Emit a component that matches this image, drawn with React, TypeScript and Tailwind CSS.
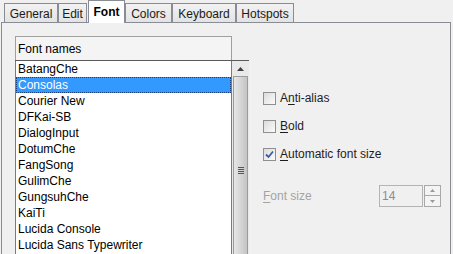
import React from 'react';

const fonts = [
  'BatangChe',
  'Consolas',
  'Courier New',
  'DFKai-SB',
  'DialogInput',
  'DotumChe',
  'FangSong',
  'GulimChe',
  'GungsuhChe',
  'KaiTi',
  'Lucida Console',
  'Lucida Sans Typewriter',
];

const tabs = [
  { label: 'General', w: 'w-[54px]' },
  { label: 'Edit', w: 'w-[29px]' },
  { label: 'Font', w: 'w-[37px]', active: true },
  { label: 'Colors', w: 'w-[47px]' },
  { label: 'Keyboard', w: 'w-[64px]' },
  { label: 'Hotspots', w: 'w-[58px]' },
];

function Checkbox({ checked, label, mn }: { checked?: boolean; label: string; mn: number }) {
  return (
    <div className="flex h-[28px] items-center">
      <div className="flex size-[13px] items-center justify-center border border-[#8e8f8f] bg-gradient-to-br from-[#dcdcdc] to-[#fbfbfb]">
        {checked && (
          <svg width="9" height="9" viewBox="0 0 9 9">
            <path d="M1 4.5 L3.5 7 L8 1.5" fill="none" stroke="#3a5da8" strokeWidth="1.8" />
          </svg>
        )}
      </div>
      <span className="ml-[4px] text-[12px] text-[#1e1e1e]">
        {label.slice(0, mn)}
        <span className="underline underline-offset-2">{label[mn]}</span>
        {label.slice(mn + 1)}
      </span>
    </div>
  );
}

export default function App() {
  return (
    <div
      className="h-[254px] w-[453px] overflow-hidden bg-[#f0f0f0] text-[12px] text-black"
      style={{ fontFamily: '"Liberation Sans", Arial, sans-serif' }}
    >
      <div className="flex h-[22px] items-end pl-[4px]">
        {tabs.map((t) =>
          t.active ? (
            <div
              key={t.label}
              className={`${t.w} relative z-10 -mb-px ml-[1px] flex h-[23px] items-center justify-center border border-b-0 border-[#898c95] bg-white pb-[1px] font-bold`}
            >
              {t.label}
            </div>
          ) : (
            <div
              key={t.label}
              className={`${t.w} flex h-[19px] items-center justify-center border border-b-0 border-[#898c95] bg-gradient-to-b from-[#f2f2f2] to-[#e3e3e3] pt-[1px] text-[#1a1a1a]`}
            >
              {t.label}
            </div>
          ),
        )}
      </div>
      <div className="ml-[1px] flex h-[232px] w-[450px] border-x border-t border-[#898c95] bg-[#f0f0f0]">
        <div className="ml-[13px] mt-[13px] w-[234px]">
          <div className="flex h-[24px] w-[217px] items-center border border-b-0 border-[#a0a0a0] bg-[#f4f4f4] pl-[2px]">
            Font names
          </div>
          <div className="flex border-t border-[#5a5a5a]">
            <div className="h-[200px] w-[217px] border-x border-[#7a7a7a] bg-white">
              {fonts.map((f) => (
                <div
                  key={f}
                  className={
                    f === 'Consolas'
                      ? 'flex h-[16px] items-center border border-dotted border-[#1a3f80] bg-[#3399ff] pl-px text-white'
                      : 'flex h-[16px] items-center pl-[2px]'
                  }
                >
                  {f}
                </div>
              ))}
            </div>
            <div className="flex w-[17px] flex-col bg-[#e9e9e9]">
              <div className="flex h-[15px] items-center justify-center">
                <svg width="7" height="4" viewBox="0 0 7 4">
                  <path d="M3.5 0 L7 4 L0 4 Z" fill="#404040" />
                </svg>
              </div>
              <div className="mx-px flex flex-1 flex-col items-center border border-[#9c9c9c] bg-gradient-to-r from-[#e6e6e6] via-[#d6d6d6] to-[#c4c4c4] pt-[90px]">
                <div className="flex flex-col gap-[1px]">
                  <div className="h-px w-[6px] bg-[#555]" />
                  <div className="h-px w-[6px] bg-[#555]" />
                  <div className="h-px w-[6px] bg-[#555]" />
                  <div className="h-px w-[6px] bg-[#555]" />
                </div>
              </div>
            </div>
          </div>
        </div>
        <div className="ml-[14px] mt-[61px] w-[186px]">
          <Checkbox label="Anti-alias" mn={1} />
          <Checkbox label="Bold" mn={0} />
          <Checkbox checked label="Automatic font size" mn={0} />
          <div className="mt-[17px] flex items-center">
            <span className="w-[116px] text-[#a3a3a3]">
              <span className="underline underline-offset-2">F</span>ont size
            </span>
            <div className="flex h-[22px] w-[44px] items-center border border-[#b4b4b4] bg-[#f0f0f0] pl-[2px] text-[#8d8d8d]">
              14
            </div>
            <div className="ml-[1px] flex h-[22px] w-[17px] flex-col">
              <div className="flex h-[11px] items-center justify-center border border-[#a8a8a8] bg-[#f4f4f4]">
                <svg width="5" height="3" viewBox="0 0 5 3">
                  <path d="M2.5 0 L5 3 L0 3 Z" fill="#9a9a9a" />
                </svg>
              </div>
              <div className="flex h-[11px] items-center justify-center border border-t-0 border-[#a8a8a8] bg-[#f4f4f4]">
                <svg width="5" height="3" viewBox="0 0 5 3">
                  <path d="M0 0 L5 0 L2.5 3 Z" fill="#9a9a9a" />
                </svg>
              </div>
            </div>
          </div>
        </div>
      </div>
    </div>
  );
}
